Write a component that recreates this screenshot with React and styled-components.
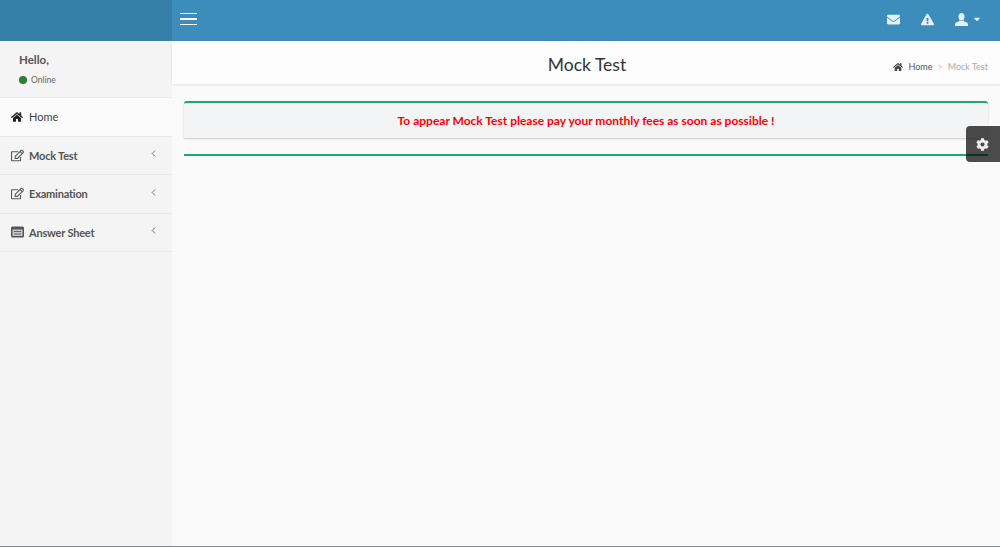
import styled, { createGlobalStyle } from 'styled-components';
import { FaHome, FaRegEdit, FaEnvelope, FaExclamationTriangle, FaCog, FaCaretDown } from 'react-icons/fa';
import { FiChevronLeft } from 'react-icons/fi';

const SheetIcon = () => (
  <svg width="13" height="12" viewBox="0 0 13 12">
    <rect x="0" y="0.5" width="13" height="11" rx="1.5" fill="#555" />
    <rect x="1.5" y="3.5" width="10" height="6.5" fill="#c9c9c9" />
    <rect x="3" y="5" width="7" height="1" fill="#666" />
    <rect x="3" y="7.5" width="7" height="1" fill="#666" />
  </svg>
);

const UserGlyph = () => (
  <svg width="13" height="13" viewBox="0 0 13 13" fill="currentColor">
    <ellipse cx="6.5" cy="3.7" rx="3" ry="3.7" />
    <path d="M4.6 7.2c-.2 1-1.4 1.4-2.6 1.9C.9 9.6.3 10.200 0 11.200V13h13v-1.800c-.3-1-.9-1.600-2-2.100-1.200-.5-2.400-.9-2.600-1.900-1.100.7-2.700.7-3.800 0z" />
  </svg>
);

const menu = [
  { label: 'Home', icon: FaHome, active: true },
  { label: 'Mock Test', icon: FaRegEdit, arrow: true },
  { label: 'Examination', icon: FaRegEdit, arrow: true },
  { label: 'Answer Sheet', icon: SheetIcon, arrow: true },
];

const Global = createGlobalStyle`
  html, body {
    margin: 0;
    padding: 0;
    height: 100%;
    background: #fafafa;
    font-family: Lato, "Noto Sans", sans-serif;
  }
`;

const App = () => (
  <>
    <Global />
    <Page>
      <Sidebar>
        <Logo />
        <UserPanel>
          <Hello>Hello,</Hello>
          <Status>
            <Dot />
            Online
          </Status>
        </UserPanel>
        <Menu>
          {menu.map(({ label, icon: Icon, active, arrow }) => (
            <MenuItem key={label} $active={active}>
              <MenuIcon $active={active}>
                <Icon />
              </MenuIcon>
              <MenuLabel $active={active}>{label}</MenuLabel>
              {arrow && (
                <Arrow>
                  <FiChevronLeft />
                </Arrow>
              )}
            </MenuItem>
          ))}
        </Menu>
      </Sidebar>
      <Main>
        <TopBar>
          <Burger>
            <span />
            <span />
            <span />
          </Burger>
          <TopIcons>
            <TopIcon>
              <FaEnvelope />
            </TopIcon>
            <TopIcon>
              <FaExclamationTriangle />
            </TopIcon>
            <UserIcon>
              <UserGlyph />
              <FaCaretDown size={10} />
            </UserIcon>
          </TopIcons>
        </TopBar>
        <Header>
          <Title>Mock Test</Title>
          <Breadcrumb>
            <FaHome size={10} />
            <Crumb>Home</Crumb>
            <Sep>&gt;</Sep>
            <Current>Mock Test</Current>
          </Breadcrumb>
        </Header>
        <Content>
          <Notice>To appear Mock Test please pay your monthly fees as soon as possible !</Notice>
          <Rule />
        </Content>
        <SettingsTab>
          <FaCog />
        </SettingsTab>
      </Main>
    </Page>
  </>
);

const Page = styled.div`
  display: flex;
  height: 547px;
  overflow: hidden;
  border-bottom: 1px solid #7f8c94;
  box-sizing: border-box;
`;

const Sidebar = styled.aside`
  width: 172px;
  flex: none;
  background: #f4f4f4;
`;

const Logo = styled.div`
  height: 41px;
  background: #367fa9;
`;

const UserPanel = styled.div`
  height: 57px;
  padding: 12px 0 0 19px;
  box-sizing: border-box;
  border-bottom: 1px solid #ebebeb;
`;

const Hello = styled.div`
  font-size: 11.5px;
  line-height: 14px;
  font-weight: 700;
  color: #555;
`;

const Status = styled.div`
  display: flex;
  align-items: center;
  gap: 4px;
  margin-top: 6px;
  font-size: 8.5px;
  line-height: 14px;
  color: #666;
`;

const Dot = styled.span`
  width: 8px;
  height: 8px;
  border-radius: 50%;
  background: #2e7d32;
`;

const Menu = styled.nav`
  display: flex;
  flex-direction: column;
`;

const MenuItem = styled.div`
  height: 38.5px;
  display: flex;
  align-items: center;
  padding: 0 13px 0 11px;
  box-sizing: border-box;
  border-bottom: 1px solid #e9e9e9;
  background: ${p => (p.$active ? '#fbfbfb' : 'transparent')};
`;

const MenuIcon = styled.span`
  width: 18px;
  display: flex;
  font-size: ${p => (p.$active ? 12 : 13)}px;
  color: ${p => (p.$active ? '#222' : '#555')};
`;

const MenuLabel = styled.span`
  flex: 1;
  font-size: 11px;
  letter-spacing: ${p => (p.$active ? '0' : '-0.2px')};
  font-weight: ${p => (p.$active ? 400 : 700)};
  color: ${p => (p.$active ? '#444' : '#555')};
`;

const Arrow = styled.span`
  display: flex;
  font-size: 11px;
  color: #666;
  margin-top: -3px;
`;

const Main = styled.main`
  position: relative;
  flex: 1;
  min-width: 0;
  background: #fafafa;
`;

const TopBar = styled.header`
  height: 41px;
  display: flex;
  align-items: center;
  justify-content: space-between;
  background: #3c8dbc;
  padding: 0 18px 3px 8px;
  box-sizing: border-box;
`;

const Burger = styled.div`
  display: flex;
  flex-direction: column;
  gap: 4px;
  width: 17px;
  span {
    height: 1.5px;
    background: #fff;
  }
`;

const TopIcons = styled.div`
  display: flex;
  align-items: center;
  gap: 21px;
`;

const TopIcon = styled.span`
  display: flex;
  font-size: 13px;
  color: #e6f0f6;
`;

const UserIcon = styled(TopIcon)`
  align-items: center;
  gap: 4px;
`;

const Header = styled.div`
  position: relative;
  height: 43px;
  display: flex;
  align-items: center;
  justify-content: center;
  background: #fdfdfd;
  box-shadow: 0 1px 2px rgba(0, 0, 0, 0.1);
  padding: 3px 10px 0 12px;
  box-sizing: border-box;
`;

const Title = styled.h1`
  margin: 0;
  font-size: 17.5px;
  font-weight: 400;
  color: #333;
`;

const Breadcrumb = styled.div`
  position: absolute;
  right: 12px;
  top: 20px;
  display: flex;
  align-items: center;
  gap: 5px;
  font-size: 9px;
  color: #444;
`;

const Crumb = styled.span`
  color: #555;
`;

const Sep = styled.span`
  color: #ccc;
`;

const Current = styled.span`
  color: #aaa;
`;

const Content = styled.div`
  padding: 17px 12px 0;
`;

const Notice = styled.div`
  height: 37px;
  display: flex;
  align-items: center;
  justify-content: center;
  padding-bottom: 1px;
  background: #f3f4f6;
  border-top: 2px solid #1aaa6a;
  border-radius: 3px 3px 0 0;
  box-shadow: 0 1px 2px rgba(0, 0, 0, 0.2);
  box-sizing: border-box;
  font-size: 12px;
  font-weight: 700;
  color: #f00;
`;

const Rule = styled.div`
  height: 2px;
  margin-top: 16px;
  background: #1aaa6a;
`;

const SettingsTab = styled.div`
  position: absolute;
  right: 0;
  top: 126px;
  width: 34px;
  height: 36px;
  padding-right: 2px;
  box-sizing: border-box;
  display: flex;
  align-items: center;
  justify-content: center;
  background: rgba(0, 0, 0, 0.7);
  border-radius: 4px 0 0 4px;
  color: #eee;
  font-size: 13px;
`;

export default App;
